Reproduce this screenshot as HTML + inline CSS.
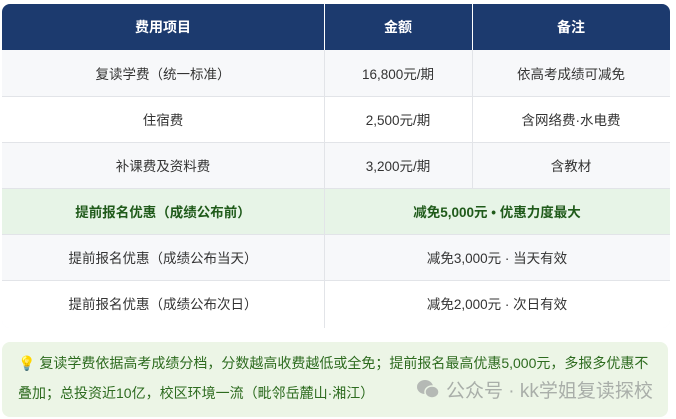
<!DOCTYPE html>
<html><head><meta charset="utf-8"><style>
*{margin:0;padding:0;box-sizing:border-box}
body{width:676px;height:419px;background:#fff;font-family:"Liberation Sans","Noto Sans CJK SC",sans-serif;position:relative;overflow:hidden}
.t{position:absolute;left:2px;top:4px;width:668px;height:324px;border-radius:8px;overflow:hidden;background:#f7f8fa}
.c{position:absolute;display:flex;align-items:center;justify-content:center;font-size:13.5px;color:#333}
.h{background:#1c3a6e;color:#fff;font-weight:bold;font-size:14px;height:46px;top:0}
.vl{position:absolute;width:1px;background:#e2e4e8}
.hl{position:absolute;left:0;width:668px;height:1px;background:#e2e4e8}
.note{position:absolute;left:2px;top:342px;width:666px;height:75px;border-radius:8px;background:#ecf5e6;color:#2d6b1f;font-size:14px;line-height:30px;padding:6px 12px 0 16px}
</style></head><body>
<div class="t">
<div class="c h" style="left:0;width:322px">费用项目</div>
<div class="c h" style="left:322px;width:148px">金额</div>
<div class="c h" style="left:470px;width:198px">备注</div>
<div style="position:absolute;left:0;top:46px;width:668px;height:46px;background:#f7f8fa"></div>
<div style="position:absolute;left:0;top:92px;width:668px;height:46px;background:#fff"></div>
<div style="position:absolute;left:0;top:138px;width:668px;height:46px;background:#f7f8fa"></div>
<div style="position:absolute;left:0;top:184px;width:668px;height:46px;background:#e7f4e7"></div>
<div style="position:absolute;left:0;top:230px;width:668px;height:46px;background:#f7f8fa"></div>
<div style="position:absolute;left:0;top:276px;width:668px;height:48px;background:#fff"></div>
<div class="vl" style="left:322px;top:0;height:46px;background:#fff"></div>
<div class="vl" style="left:470px;top:0;height:46px;background:#fff"></div>
<div class="vl" style="left:322px;top:46px;height:278px"></div>
<div class="vl" style="left:470px;top:46px;height:138px"></div>
<div class="hl" style="top:92px"></div><div class="hl" style="top:138px"></div><div class="hl" style="top:184px"></div><div class="hl" style="top:230px"></div><div class="hl" style="top:276px"></div>
<div class="c" style="left:0;width:322px;top:46px;height:46px">复读学费（统一标准）</div>
<div class="c" style="left:322px;width:148px;top:46px;height:46px">16,800元/期</div>
<div class="c" style="left:470px;width:198px;top:46px;height:46px">依高考成绩可减免</div>
<div class="c" style="left:0;width:322px;top:92px;height:46px">住宿费</div>
<div class="c" style="left:322px;width:148px;top:92px;height:46px">2,500元/期</div>
<div class="c" style="left:470px;width:198px;top:92px;height:46px">含网络费·水电费</div>
<div class="c" style="left:0;width:322px;top:138px;height:46px">补课费及资料费</div>
<div class="c" style="left:322px;width:148px;top:138px;height:46px">3,200元/期</div>
<div class="c" style="left:470px;width:198px;top:138px;height:46px">含教材</div>
<div class="c" style="left:0;width:322px;top:184px;height:46px;font-weight:bold;color:#1f5a1a">提前报名优惠（成绩公布前）</div>
<div class="c" style="left:322px;width:346px;top:184px;height:46px;font-weight:bold;color:#1f5a1a">减免5,000元 • 优惠力度最大</div>
<div class="c" style="left:0;width:322px;top:230px;height:46px">提前报名优惠（成绩公布当天）</div>
<div class="c" style="left:322px;width:346px;top:230px;height:46px">减免3,000元 · 当天有效</div>
<div class="c" style="left:0;width:322px;top:276px;height:46px">提前报名优惠（成绩公布次日）</div>
<div class="c" style="left:322px;width:346px;top:276px;height:46px">减免2,000元 · 次日有效</div>
</div>
<div class="note"><span style="color:#e8b82a">💡</span> 复读学费依据高考成绩分档，分数越高收费越低或全免；提前报名最高优惠5,000元，多报多优惠不叠加；总投资近10亿，校区环境一流（毗邻岳麓山·湘江）</div>
<div style="position:absolute;left:416px;top:374px;height:30px;display:flex;align-items:center;color:#a9aea9;font-size:19px;white-space:nowrap">
<svg width="24" height="22" viewBox="0 0 24 22" style="margin-right:6px"><ellipse cx="9" cy="9" rx="8" ry="7" fill="#b5b9b5"/><ellipse cx="16" cy="14" rx="7" ry="6" fill="#b5b9b5" stroke="#ecf5e6" stroke-width="1.5"/></svg>公众号 · kk学姐复读探校</div>
</body></html>
